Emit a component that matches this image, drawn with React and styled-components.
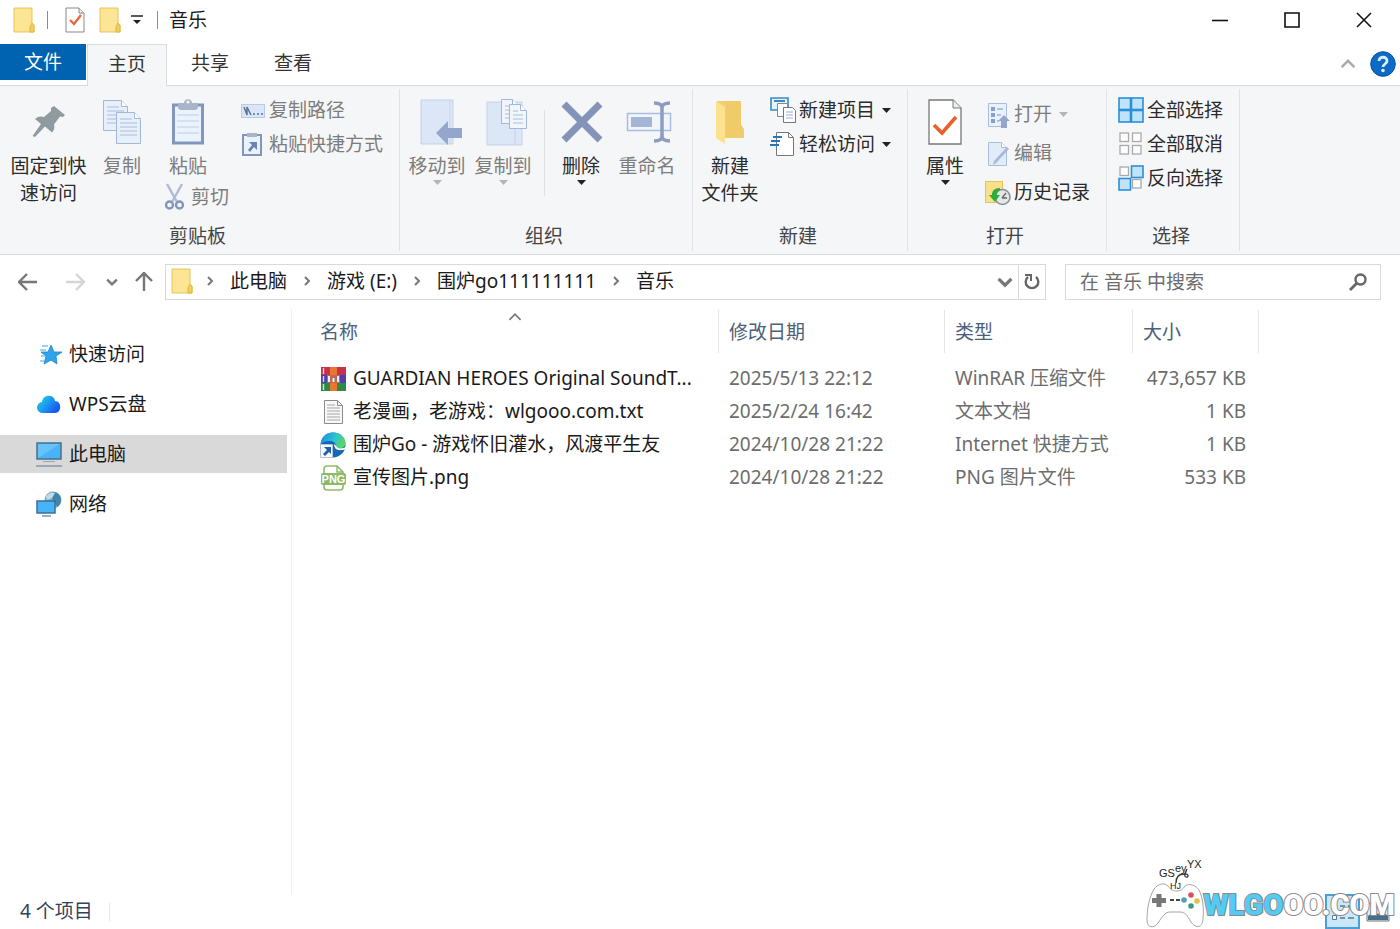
import React from "react"
import styled, { createGlobalStyle } from "styled-components"

const GlobalStyle = createGlobalStyle`
  * {
    box-sizing: border-box;
  }
  body {
    margin: 0;
    background: #fff;
    color: #1a1a1a;
    font: 19px/27px "Noto Sans", "Noto Sans CJK SC", sans-serif;
  }
  button, input {
    font: inherit;
    color: inherit;
    background: none;
    border: 0;
    padding: 0;
    margin: 0;
  }
  svg {
    display: block;
    flex: none;
  }
`;

const Window = styled.div`
  position: relative;
  display: flex;
  flex-direction: column;
  min-height: 100vh;
  overflow: hidden;
`;

/* title bar */

const TitleBar = styled.header`
  display: flex;
  align-items: center;
  height: 44px;
  padding: 0 0 4px 13px;
`;

const QuickButton = styled.button`
  display: flex;
  justify-content: center;
  width: ${props => props.$width || 24}px;
`;

const TitleDivider = styled.span`
  width: 1px;
  height: 18px;
  margin: 0 11px 0 12px;
  background: #8c8c8c;
`;

const Title = styled.h1`
  flex: 1;
  margin: 0;
  font-size: 19px;
  font-weight: 400;
`;

const WindowButton = styled.button`
  display: flex;
  align-items: center;
  justify-content: center;
  width: 72px;
  height: 40px;
`;

/* ribbon */

const TabRow = styled.nav`
  display: flex;
  align-items: flex-start;
  gap: 3px;
  height: 42px;
  padding-right: 4px;
  box-shadow: inset 0 -1px #dadbdc;
`;

const FileTab = styled.button`
  width: 86px;
  height: 36px;
  margin-right: -2px;
  background: #0063b1;
  color: #fff;
`;

const Tab = styled.button`
  width: 80px;
  height: 42px;
  padding-bottom: 3px;
  color: #333;
  ${props => props.$active && `
    background: #f5f6f7;
    border: 1px solid #dadbdc;
    border-bottom: 0;
  `}
`;

const TabTools = styled.div`
  display: flex;
  align-items: center;
  gap: 14px;
  height: 40px;
  margin-left: auto;
`;

const Ribbon = styled.section`
  display: flex;
  padding: 3px 0;
  background: #f5f6f7;
  border-bottom: 1px solid #dadbdc;
`;

const GroupBox = styled.div`
  display: flex;
  flex-direction: column;
  width: ${props => props.$width}px;
  border-right: 1px solid #e0e2e4;
`;

const GroupBody = styled.div`
  display: flex;
  height: 134px;
  padding-left: ${props => props.$indent}px;
`;

const GroupLabel = styled.div`
  height: 28px;
  padding-right: 4px;
  text-align: center;
  color: #444;
`;

const BigButton = styled.button`
  display: flex;
  flex-direction: column;
  align-items: center;
  align-self: flex-start;
  width: ${props => props.$width || 66}px;
  padding-top: 9px;
  color: ${props => props.$off ? "#7d7d7d" : "#2b2b2b"};
  white-space: nowrap;
`;

const BigIcon = styled.span`
  display: flex;
  align-items: center;
  justify-content: center;
  height: 48px;
  margin-bottom: 7px;
`;

const SmallButton = styled.button`
  display: flex;
  align-items: center;
  gap: 3px;
  height: ${props => props.$height || 34}px;
  color: ${props => props.$off ? "#7d7d7d" : "#2b2b2b"};
  white-space: nowrap;

  span + svg {
    margin-left: 4px;
  }
`;

const Stack = styled.div`
  display: flex;
  flex-direction: column;
  align-items: flex-start;
  padding-top: ${props => props.$top || 0}px;
  margin-left: ${props => props.$gap || 0}px;
`;

const CutSlot = styled.div`
  padding-left: 7px;
`;

const RibbonRule = styled.span`
  width: 1px;
  height: 86px;
  margin: 21px 3px 0 8px;
  background: #dfe1e3;
`;

/* address row */

const AddressRow = styled.div`
  display: flex;
  align-items: center;
  height: 54px;
  padding: 0 19px 0 4px;
`;

const NavButton = styled.button`
  display: flex;
  justify-content: center;
  width: ${props => props.$width}px;
`;

const AddressBox = styled.div`
  display: flex;
  flex: 1;
  height: 36px;
  margin: 0 19px 0 3px;
  border: 1px solid #d9d9d9;
`;

const Crumbs = styled.ol`
  display: flex;
  flex: 1;
  align-items: center;
  gap: 15px;
  margin: 0;
  padding: 0 0 2px 5px;
  list-style: none;

  > svg {
    margin-right: -3px;
  }
`;

const Crumb = styled.li`
  display: flex;
  align-items: center;
  gap: 15px;
`;

const CrumbLink = styled.a`
  color: #1a1a1a;
  text-decoration: none;
  white-space: nowrap;
`;

const BoxButton = styled.button`
  display: flex;
  align-items: center;
  justify-content: center;
  width: ${props => props.$ruled ? 27 : 26}px;
  border-left: ${props => props.$ruled ? "1px solid #d9d9d9" : "0"};
`;

const SearchBox = styled.form`
  display: flex;
  align-items: center;
  width: 316px;
  height: 36px;
  padding: 0 12px 0 14px;
  border: 1px solid #d9d9d9;
`;

const SearchInput = styled.input`
  flex: 1;
  min-width: 0;
  outline: 0;

  &::placeholder {
    color: #6d6d6d;
    opacity: 1;
  }
`;

/* body */

const Body = styled.div`
  display: flex;
  flex: 1;
`;

const Sidebar = styled.nav`
  display: flex;
  flex-direction: column;
  gap: 12px;
  width: 292px;
  padding: 26px 4px 0 0;
  border-right: 1px solid #f0f0f0;
`;

const SideLink = styled.a`
  display: flex;
  align-items: center;
  gap: 7px;
  height: 38px;
  padding-left: 36px;
  background: ${props => props.$active ? "#d9d9d9" : "none"};
  color: #1a1a1a;
  text-decoration: none;
`;

const Files = styled.main`
  flex: 1;
  padding: 1px 0 0 18px;
`;

const Table = styled.table`
  width: 949px;
  table-layout: fixed;
  border-collapse: collapse;
`;

const Th = styled.th`
  position: relative;
  width: ${props => props.$width}px;
  padding: 0 0 9px;
  color: #4c607a;
  font-weight: 400;
  text-align: left;
`;

const ThLabel = styled.div`
  height: 43px;
  padding: 9px 10px 0;
  border-right: 1px solid #e5e5e5;
`;

const SortMark = styled.span`
  position: absolute;
  top: 0;
  right: 0;
  left: 0;
  display: flex;
  justify-content: center;
`;

const Td = styled.td`
  height: 33px;
  padding: 0 13px 0 10px;
  color: #6d6d6d;
  text-align: ${props => props.$right ? "right" : "left"};
  white-space: nowrap;
`;

const FileName = styled.div`
  display: flex;
  align-items: center;
  gap: 7px;
  color: #1a1a1a;
`;

const StatusBar = styled.footer`
  display: flex;
  align-items: center;
  height: 35px;
  padding: 0 5px 0 20px;
  color: #33415c;
`;

const StatusRule = styled.span`
  width: 1px;
  height: 18px;
  margin: 0 auto 0 16px;
  background: #e5e5e5;
`;

const ViewButton = styled.button`
  display: flex;
  align-items: center;
  justify-content: center;
  width: 35px;
  height: 35px;
  border: ${props => props.$active ? "2px solid #4a9fd8" : "0"};
  background: ${props => props.$active ? "#cbe8fa" : "none"};
`;

const Watermark = styled.div`
  position: absolute;
  right: 5px;
  bottom: 0;
  display: flex;
  align-items: flex-end;
  pointer-events: none;
`;

const WatermarkText = styled.span`
  padding-bottom: 4px;
  color: #fff;
  font: 900 29px/40px Roboto, "Liberation Sans", sans-serif;
  -webkit-text-stroke: 2px #8a8a8a;
  paint-order: stroke fill;

  b {
    color: #4fcdf5;
  }
`;

/* icons */

const Svg = ({ w, h, children }) => (
  <svg width={w} height={h} viewBox={`0 0 ${w} ${h}`} fill="none" aria-hidden="true">{children}</svg>
)

const Folder = () => (
  <Svg w={22} h={26}>
    <path d="M1 1h18v15l2 2v7H1z" fill="#fbe08a" stroke="#e9c75c" />
    <path d="M2 2h16v14l-2 4v4H2z" fill="#fde596" />
    <path d="M19 16l-2 4v5h4v-7z" fill="#f3cf62" stroke="#e0b843" />
  </Svg>
)

const CheckDoc = () => (
  <Svg w={20} h={26}>
    <path d="M1 1h13l5 5v19H1z" fill="#fff" stroke="#888" />
    <path d="M14 1v5h5" fill="#eee" stroke="#888" />
    <path d="M5 13l4 4 7-9" stroke="#e8673f" strokeWidth="2.4" />
  </Svg>
)

const Caret = ({ off }) => (
  <Svg w={9} h={5}><path d="M0 0h9L4.500 5z" fill={off ? "#b5b5b5" : "#222"} /></Svg>
)

const Pin = () => (
  <Svg w={34} h={34}>
    <path d="M22 1l11 9-2 2-3-0.500-6 8c1 3 0 6-2 8l-7-6L3 32l-2.500-1L9 19l-6-5c3-3 6-3 9-2l7-6v-3z" fill="#909ba1" />
  </Svg>
)

const Page = ({ x, y, w = 24, h = 31, fill = "#e6effa" }) => (
  <g transform={`translate(${x} ${y})`}>
    <path d={`M0.500 0.500h${w - 7}l6 6v${h - 7}h-${w - 1}z`} fill={fill} stroke="#a3b8d8" />
    <path d={`M${w - 6.500} 0.500v6h6`} stroke="#a3b8d8" fill="#fff" />
    <path d={`M4 7h${w - 13}M4 11h${w - 8}M4 15h${w - 8}M4 19h${w - 8}${h > 28 ? `M4 23h${w - 8}` : ""}`} stroke="#a9bcda" />
  </g>
)

const Copy = () => (
  <Svg w={38} h={46}><Page x={0} y={1} w={25} /><Page x={13} y={13} w={25} h={32} /></Svg>
)

const Paste = () => (
  <Svg w={34} h={48}>
    <rect x="2.500" y="7" width="29" height="38" fill="#eaf2fc" stroke="#8295bd" strokeWidth="3" />
    <path d="M6 17h22M6 23h22M6 29h22M6 35h22" stroke="#cbdaf0" strokeWidth="1.500" />
    <path d="M7 5h6c0-5 8-5 8 0h6v5l-2 2H9l-2-2z" fill="#aab5ca" />
    <circle cx="17" cy="4" r="1.500" fill="#f5f6f7" />
  </Svg>
)

const CopyPath = () => (
  <Svg w={26} h={26}>
    <rect x="1.500" y="7.500" width="23" height="13" fill="#d9e6f7" stroke="#b9cae4" />
    <path d="M4 10l3 8V10l4 8" stroke="#5c7299" strokeWidth="1.500" />
    <path d="M13 17h2M17 17h2M21 17h2" stroke="#5c7299" strokeWidth="1.600" />
  </Svg>
)

const PasteLink = () => (
  <Svg w={26} h={26}>
    <rect x="3" y="4" width="18" height="20" fill="#eaf2fc" stroke="#8295bd" strokeWidth="2" />
    <path d="M7 2h10v4H7z" fill="#aab5ca" />
    <path d="M9 11h8v8l-3-3-4 5-2-2 4-5z" fill="#6d84b3" />
  </Svg>
)

const Cut = () => (
  <Svg w={26} h={28}>
    <path d="M5 1l10 18M20 1L10 19" stroke="#adbcd8" strokeWidth="2.500" />
    <circle cx="7.500" cy="22" r="3.500" stroke="#8295bd" strokeWidth="2.400" />
    <circle cx="17.500" cy="22" r="3.500" stroke="#8295bd" strokeWidth="2.400" />
  </Svg>
)

const MoveTo = () => (
  <Svg w={50} h={46}>
    <path d="M9 1h32v44H9z" fill="#dbe6f6" stroke="#c2d2ea" />
    <path d="M38 1v44" stroke="#c9d8ee" />
    <path d="M24 34l12-12v7h14v10H36v7z" fill="#94a6ca" />
  </Svg>
)

const CopyTo = () => (
  <Svg w={50} h={48}>
    <path d="M9 4h35v43H9z" fill="#dbe6f6" stroke="#c2d2ea" />
    <path d="M37 24v23" stroke="#c2d2ea" />
    <Page x={23} y={1} w={18} h={25} fill="#f1f6fd" />
    <Page x={31} y={6} w={18} h={25} fill="#f1f6fd" />
  </Svg>
)

const Delete = () => (
  <Svg w={46} h={42}><path d="M6 3l36 36M42 3L6 39" stroke="#8394b8" strokeWidth="7" /></Svg>
)

const Rename = () => (
  <Svg w={50} h={44}>
    <rect x="5.500" y="13.500" width="43" height="17" fill="#f1f6fd" stroke="#a9bedf" strokeWidth="1.500" />
    <rect x="9" y="17" width="21" height="10" fill="#a5b6d5" />
    <path d="M32 3c5 0 8 1 8 5v28c0 4-3 5-8 5M48 3c-5 0-8 1-8 5M48 41c-5 0-8-1-8-5" stroke="#8c9dc0" strokeWidth="3.500" />
  </Svg>
)

const NewFolder = () => (
  <Svg w={30} h={44}>
    <path d="M2 1h24v24l3 4v9H2z" fill="#f2cf6e" />
    <path d="M11 1h15v24l2 4v8H11z" fill="#efcb69" />
    <path d="M1 1l9 6v37l-9-6z" fill="#fde28e" />
  </Svg>
)

const NewItem = () => (
  <Svg w={26} h={26}>
    <path d="M1 1h17v12H1z" fill="#e6f3fc" stroke="#3b87c0" strokeWidth="1.600" />
    <path d="M4 4h11" stroke="#3b87c0" strokeWidth="2" />
    <path d="M7.500 6.500h10v13h-10z" fill="#fff" stroke="#888" />
    <path d="M13.500 10.500h9l3 3v12h-12z" fill="#fff" stroke="#777" />
    <path d="M16 15h7M16 18h7M16 21h7" stroke="#9cabdc" />
  </Svg>
)

const EasyAccess = () => (
  <Svg w={26} h={26}>
    <path d="M6.500 1.500h12l5 5v18h-17z" fill="#fff" stroke="#777" />
    <path d="M18.500 1.500v5h5" stroke="#777" />
    <path d="M3 6h9M1 10h9M0 14h9" stroke="#2777bb" strokeWidth="2" />
  </Svg>
)

const Properties = () => (
  <Svg w={34} h={46}>
    <path d="M1 1h24l8 8v36H1z" fill="#fff" stroke="#777" strokeWidth="1.300" />
    <path d="M25 1v8h8" fill="#eee" stroke="#777" />
    <path d="M6 26l8 8 14-16" stroke="#e8602c" strokeWidth="3.600" />
  </Svg>
)

const Open = () => (
  <Svg w={26} h={26}>
    <path d="M3.500 1.500h18v23h-18z" fill="#e9f1fb" stroke="#a9bedf" />
    <path d="M6 5h4v4H6zM6 11h4v4H6zM6 17h4v4H6z" fill="#8ba0c8" />
    <path d="M12 7h6M12 13h4M12 19h2" stroke="#9db0d2" strokeWidth="1.500" />
    <path d="M19 13l6 6h-3v7h-6v-7h-3z" fill="#94a6ca" />
  </Svg>
)

const Edit = () => (
  <Svg w={26} h={26}>
    <path d="M3.500 1.500h13l5 5v18h-18z" fill="#e2ecf9" stroke="#a9bedf" />
    <path d="M16.500 1.500v5h5" fill="#fff" stroke="#a9bedf" />
    <path d="M24 8L11 22l-3 2 1-4L22 6z" fill="#a9b8d4" />
  </Svg>
)

const History = () => (
  <Svg w={26} h={26}>
    <path d="M0.500 1.500h17v21h-17z" fill="#fbe08a" stroke="#e6c353" />
    <circle cx="17.500" cy="17" r="7.500" fill="#e4e6ea" stroke="#8a8e96" strokeWidth="1.600" />
    <path d="M17 18l4-5M17 18h5" stroke="#666" strokeWidth="1.300" />
    <path d="M15 8C9 8 7 11 7 15H4l6 7 5-7h-3c0-3 1-4 3-5z" fill="#2fae3c" />
  </Svg>
)

const selected = { fill: "#bfe3fb", stroke: "#2d8fd5", strokeWidth: 1.600 }
const unselected = { fill: "#fdfdfd", stroke: "#aaa", strokeWidth: 1.300 }

// four tiles, `on` lists which of them are picked
const Tiles = ({ on }) => (
  <Svg w={26} h={26}>
    {[[0, 0], [1, 0], [0, 1], [1, 1]].map(([cx, cy], i) => {
      const picked = on.includes(i)
      const size = picked ? 11.500 : 8.500
      const inset = picked ? 1 : 2
      return (
        <rect
          key={i}
          x={inset + cx * 12.500}
          y={inset + cy * 12.500}
          width={size}
          height={size}
          {...(picked ? selected : unselected)}
        />
      )
    })}
  </Svg>
)

const Chevron = ({ dir = "down", size = 10, color = "#777", weight = 2 }) => {
  const turn = { down: 0, up: 180, right: -90 }[dir]
  return (
    <svg width={size} height={size} viewBox="0 0 10 10" fill="none" aria-hidden="true">
      <path d="M1 3l4 4 4-4" stroke={color} strokeWidth={weight} transform={`rotate(${turn} 5 5)`} />
    </svg>
  )
}

const Arrow = ({ turn = 0, color = "#777" }) => (
  <Svg w={20} h={20}>
    <path d="M1 10h18M9 2L1 10l8 8" stroke={color} strokeWidth="2.400" transform={`rotate(${turn} 10 10)`} />
  </Svg>
)

const Refresh = () => (
  <Svg w={18} h={20}>
    <path d="M13 5a6.300 6.300 0 1 1-8 0" stroke="#666" strokeWidth="2.400" />
    <path d="M2 3h6v6" stroke="#666" strokeWidth="2" />
  </Svg>
)

const SearchIcon = () => (
  <Svg w={20} h={20}>
    <circle cx="12.500" cy="7.500" r="5" stroke="#666" strokeWidth="2.400" />
    <path d="M9 11l-7 7" stroke="#666" strokeWidth="2.800" />
  </Svg>
)

const Help = () => (
  <Svg w={26} h={26}>
    <circle cx="13" cy="13" r="12.300" fill="#0b6bc7" stroke="#0a539c" />
    <path d="M9 10c0-5 8-5 8 0 0 3-4 3-4 6" stroke="#dff0ff" strokeWidth="2.800" />
    <circle cx="13" cy="19.500" r="1.800" fill="#dff0ff" />
  </Svg>
)

const Star = () => (
  <Svg w={26} h={22}>
    <path d="M15 2l3 7h8l-6 4 1 8-6-4-7 4 2-8-5-4h7z" fill="#31a3ea" stroke="#1c83cb" strokeWidth="0.800" />
    <path d="M6 3h6M4 7h6M5 13h4M4 18h4" stroke="#7cc6f4" strokeWidth="1.400" />
  </Svg>
)

const Cloud = () => (
  <Svg w={26} h={22}>
    <defs>
      <linearGradient id="cloud" x1="0" y1="0" x2="1" y2="0.600">
        <stop offset="0" stopColor="#1ee0d0" />
        <stop offset="0.500" stopColor="#1b9df3" />
        <stop offset="1" stopColor="#1a56ee" />
      </linearGradient>
    </defs>
    <path d="M7 20a5.500 5.500 0 0 1-1-11C7 1 18 1 19 8c7 0 7 12 0 12z" fill="url(#cloud)" />
  </Svg>
)

const Computer = () => (
  <Svg w={26} h={26}>
    <path d="M1 2h24v16H1z" fill="#48b4f6" stroke="#47708f" strokeWidth="1.500" />
    <path d="M2 3h22L2 17z" fill="#7dccfa" opacity="0.600" />
    <path d="M7 20.500h12" stroke="#9aa7b0" />
    <path d="M0 25h26" stroke="#8c9cab" strokeWidth="1.600" />
  </Svg>
)

const Network = () => (
  <Svg w={26} h={26}>
    <circle cx="17" cy="9" r="8.500" fill="#7fb0cc" />
    <path d="M17 1c5 0 8 4 8 8 0 3-2 6-4 7l-2-5-3-3z" fill="#4384ab" />
    <path d="M10 5c3-3 6-4 9-3l-3 5-5 2z" fill="#c1dce8" />
    <path d="M1 10h18v12H1z" fill="#48b4f6" stroke="#3b6f96" strokeWidth="1.500" />
    <path d="M6 25h9" stroke="#7d95a7" strokeWidth="1.500" />
  </Svg>
)

const Rar = () => (
  <Svg w={26} h={24}>
    <path d="M1 0h25v8H1z" fill="#c9304a" />
    <path d="M1 8h25v8H1z" fill="#4d3fb0" />
    <path d="M1 16h25v8H1z" fill="#2c8a45" />
    <path d="M10 0h7v24h-7z" fill="#e8772c" />
    <path d="M7 8h13v8H7z" fill="#b86a55" />
    <path d="M9 15V9M13.500 15v-4M18 15V9" stroke="#fff" strokeWidth="1.800" />
    <path d="M3.500 1v6M3.500 9v6M3.500 17v6" stroke="#fff" strokeWidth="1.400" opacity="0.800" />
  </Svg>
)

const TextFile = () => (
  <Svg w={26} h={26}>
    <path d="M4.500 1.500h13l5 5v18h-18z" fill="#f8f8f8" stroke="#8b8b8b" />
    <path d="M17.500 1.500v5h5" stroke="#8b8b8b" />
    <path d="M7 6h8M7 9h13M7 12h13M7 15h13M7 18h13M7 21h13" stroke="#a5a5a5" />
  </Svg>
)

const Edge = () => (
  <Svg w={26} h={26}>
    <defs>
      <linearGradient id="edge" x1="0" y1="0" x2="1" y2="0.300">
        <stop offset="0" stopColor="#1a8de0" />
        <stop offset="0.600" stopColor="#2bc1d4" />
        <stop offset="1" stopColor="#58d668" />
      </linearGradient>
    </defs>
    <circle cx="13" cy="13" r="12.500" fill="#1565b8" />
    <path d="M1 12C1 5 6 0.500 13 0.500c8 0 12.500 5 12.500 10.500 0 4-4 6-8 6-3 0-3-2-2-4 0-3-3-4-6-4-4 0-7 1-8.500 3z" fill="url(#edge)" />
    <path d="M14 12c0 5 4 8 12 5v-2c-4 2-9 2-10-1z" fill="#fff" />
    <path d="M0.500 12.500h12v13h-12z" fill="#f5faff" stroke="#b5c3d0" />
    <path d="M4 15h7v7l-2-2-4 4-2-2 4-4z" fill="#1d5fa8" />
  </Svg>
)

const Png = () => (
  <Svg w={26} h={26}>
    <path d="M4 8V4q0-3 3-3h10l6 6v1M4 20v2q0 3 3 3h13q3 0 3-3v-2" stroke="#8dba6a" strokeWidth="1.600" />
    <path d="M17 1v6h6" stroke="#8dba6a" strokeWidth="1.400" />
    <rect x="1" y="8" width="25" height="12" rx="2" fill="#8dba6a" />
    <text x="13.500" y="18" fill="#fff" textAnchor="middle" fontSize="11" fontWeight="700" fontFamily="Liberation Sans">PNG</text>
  </Svg>
)

const DetailsView = () => (
  <Svg w={26} h={24}>
    <path d="M2.500 3.500h4v4h-4zM2.500 15.500h4v4h-4z" fill="#fff" stroke="#5a7894" />
    <path d="M10 6h5M18 6h6M10 18h5M18 18h6" stroke="#5a7894" strokeWidth="1.500" />
  </Svg>
)

const ThumbView = () => (
  <Svg w={24} h={20}>
    <path d="M1 1h22v18H1z" fill="#dff0fb" stroke="#777" />
    <path d="M2 14l6-5 6 4 4-2 4 3v4H2z" fill="#456f8a" />
  </Svg>
)

const Gamepad = () => (
  <Svg w={58} h={74}>
    <path d="M8 34c4-5 10-7 14-3 3 4 5 5 9 5s6-2 8-5c4-3 11-1 14 4 4 8 5 19 4 28 0 10-7 11-12 4-4-7-6-10-11-10H24c-5 0-8 5-12 11-4 6-11 5-11-3 0-11 2-22 7-31z" fill="#fff" stroke="#a5a5a5" />
    <path d="M13 39v13M6 45.500h14" stroke="#777" strokeWidth="5" />
    <path d="M24 45h4M30 45h4" stroke="#444" strokeWidth="2" />
    <circle cx="45" cy="40" r="2.800" fill="#d8505c" />
    <circle cx="38" cy="45" r="2.800" fill="#4aa3bd" />
    <circle cx="51" cy="46" r="2.800" fill="#dfc44a" />
    <circle cx="45" cy="51" r="2.800" fill="#3d9c78" />
    <path d="M30 28c0-6 3-9 8-9 5-1 5 4 2 3s0-5 1-8" stroke="#333" strokeWidth="1.300" />
    <g fill="#222" fontFamily="Liberation Sans">
      <text x="13" y="22" fontSize="11">GS</text>
      <text x="29" y="17" fontSize="11">ey</text>
      <text x="41" y="13" fontSize="11">YX</text>
      <text x="24" y="34" fontSize="9">HJ</text>
    </g>
  </Svg>
)

const Group = ({ label, width, indent = 4, children }) => (
  <GroupBox $width={width}>
    <GroupBody $indent={indent}>{children}</GroupBody>
    <GroupLabel>{label}</GroupLabel>
  </GroupBox>
)

const Big = ({ icon, caret, off, width, children }) => (
  <BigButton $off={off} $width={width}>
    <BigIcon>{icon}</BigIcon>
    <span>{children}</span>
    {caret && <Caret off={off} />}
  </BigButton>
)

const Small = ({ icon, caret, off, height, children }) => (
  <SmallButton $off={off} $height={height}>
    {icon}
    <span>{children}</span>
    {caret && <Caret off={off} />}
  </SmallButton>
)

const crumbs = ["此电脑", "游戏 (E:)", "围炉go111111111", "音乐"]

const places = [
  { name: "快速访问", icon: <Star /> },
  { name: "WPS云盘", icon: <Cloud /> },
  { name: "此电脑", icon: <Computer />, active: true },
  { name: "网络", icon: <Network /> },
]

const columns = [
  { name: "名称", width: 409 },
  { name: "修改日期", width: 226 },
  { name: "类型", width: 188 },
  { name: "大小", width: 126 },
]

const files = [
  { icon: <Rar />, name: "GUARDIAN HEROES Original SoundT...", date: "2025/5/13 22:12", type: "WinRAR 压缩文件", size: "473,657 KB" },
  { icon: <TextFile />, name: "老漫画，老游戏：wlgooo.com.txt", date: "2025/2/24 16:42", type: "文本文档", size: "1 KB" },
  { icon: <Edge />, name: "围炉Go - 游戏怀旧灌水，风渡平生友", date: "2024/10/28 21:22", type: "Internet 快捷方式", size: "1 KB" },
  { icon: <Png />, name: "宣传图片.png", date: "2024/10/28 21:22", type: "PNG 图片文件", size: "533 KB" },
]

const App = () => (
  <Window lang="zh-CN">
    <GlobalStyle />
    <TitleBar>
      <Folder />
      <TitleDivider />
      <QuickButton $width={32} aria-label="属性"><CheckDoc /></QuickButton>
      <QuickButton $width={38} aria-label="新建文件夹"><Folder /></QuickButton>
      <QuickButton $width={16} aria-label="自定义快速访问工具栏">
        <Svg w={12} h={10}><path d="M0 1h12" stroke="#222" strokeWidth="1.500" /><path d="M2 5h8l-4 4z" fill="#222" /></Svg>
      </QuickButton>
      <TitleDivider />
      <Title>音乐</Title>
      <WindowButton aria-label="最小化">
        <Svg w={16} h={16}><path d="M0 8.500h16" stroke="#111" strokeWidth="1.600" /></Svg>
      </WindowButton>
      <WindowButton aria-label="最大化">
        <Svg w={16} h={16}><path d="M1 1h14v14H1z" stroke="#111" strokeWidth="1.600" /></Svg>
      </WindowButton>
      <WindowButton aria-label="关闭">
        <Svg w={16} h={16}><path d="M1 1l14 14M15 1L1 15" stroke="#111" strokeWidth="1.500" /></Svg>
      </WindowButton>
    </TitleBar>

    <TabRow>
      <FileTab>文件</FileTab>
      <Tab $active>主页</Tab>
      <Tab>共享</Tab>
      <Tab>查看</Tab>
      <TabTools>
        <button aria-label="折叠功能区"><Chevron dir="up" size={16} color="#aaa" weight={1.500} /></button>
        <button aria-label="帮助"><Help /></button>
      </TabTools>
    </TabRow>

    <Ribbon>
      <Group label="剪贴板" width={400} indent={8}>
        <Big icon={<Pin />} width={81}>固定到快<br />速访问</Big>
        <Big icon={<Copy />} off>复制</Big>
        <Stack>
          <Big icon={<Paste />} off>粘贴</Big>
          <CutSlot><Small icon={<Cut />} height={34} off>剪切</Small></CutSlot>
        </Stack>
        <Stack $top={4} $gap={11}>
          <Small icon={<CopyPath />} off>复制路径</Small>
          <Small icon={<PasteLink />} off>粘贴快捷方式</Small>
        </Stack>
      </Group>
      <Group label="组织" width={293}>
        <Big icon={<MoveTo />} off caret>移动到</Big>
        <Big icon={<CopyTo />} off caret>复制到</Big>
        <RibbonRule />
        <Big icon={<Delete />} caret>删除</Big>
        <Big icon={<Rename />} off>重命名</Big>
      </Group>
      <Group label="新建" width={215}>
        <Big icon={<NewFolder />}>新建<br />文件夹</Big>
        <Stack $top={4} $gap={7}>
          <Small icon={<NewItem />} caret>新建项目</Small>
          <Small icon={<EasyAccess />} caret>轻松访问</Small>
        </Stack>
      </Group>
      <Group label="打开" width={199}>
        <Big icon={<Properties />} caret>属性</Big>
        <Stack $top={6} $gap={7}>
          <Small icon={<Open />} height={39} off caret>打开</Small>
          <Small icon={<Edit />} height={39} off>编辑</Small>
          <Small icon={<History />} height={39}>历史记录</Small>
        </Stack>
      </Group>
      <Group label="选择" width={133} indent={11}>
        <Stack $top={4}>
          <Small icon={<Tiles on={[0, 1, 2, 3]} />}>全部选择</Small>
          <Small icon={<Tiles on={[]} />}>全部取消</Small>
          <Small icon={<Tiles on={[1, 2]} />}>反向选择</Small>
        </Stack>
      </Group>
    </Ribbon>

    <AddressRow>
      <NavButton $width={48} aria-label="后退"><Arrow /></NavButton>
      <NavButton $width={46} aria-label="前进"><Arrow turn={180} color="#d5d5d5" /></NavButton>
      <NavButton $width={28} aria-label="最近浏览的位置"><Chevron size={12} /></NavButton>
      <NavButton $width={36} aria-label="上移"><Arrow turn={90} /></NavButton>
      <AddressBox>
        <Crumbs>
          <Folder />
          {crumbs.map(crumb => (
            <Crumb key={crumb}>
              <Chevron dir="right" />
              <CrumbLink href="#">{crumb}</CrumbLink>
            </Crumb>
          ))}
        </Crumbs>
        <BoxButton aria-label="以前的位置"><Chevron size={16} /></BoxButton>
        <BoxButton $ruled aria-label="刷新"><Refresh /></BoxButton>
      </AddressBox>
      <SearchBox role="search">
        <SearchInput aria-label="搜索" placeholder="在 音乐 中搜索" />
        <SearchIcon />
      </SearchBox>
    </AddressRow>

    <Body>
      <Sidebar>
        {places.map(place => (
          <SideLink key={place.name} href="#" $active={place.active}>
            {place.icon}
            {place.name}
          </SideLink>
        ))}
      </Sidebar>
      <Files>
        <Table>
          <thead>
            <tr>
              {columns.map((column, i) => (
                <Th key={column.name} $width={column.width}>
                  {i === 0 && <SortMark><Chevron dir="up" size={14} weight={1.200} /></SortMark>}
                  <ThLabel>{column.name}</ThLabel>
                </Th>
              ))}
            </tr>
          </thead>
          <tbody>
            {files.map(file => (
              <tr key={file.name}>
                <Td><FileName>{file.icon}{file.name}</FileName></Td>
                <Td>{file.date}</Td>
                <Td>{file.type}</Td>
                <Td $right>{file.size}</Td>
              </tr>
            ))}
          </tbody>
        </Table>
      </Files>
    </Body>

    <StatusBar>
      <span>4 个项目</span>
      <StatusRule />
      <ViewButton $active aria-label="详细信息"><DetailsView /></ViewButton>
      <ViewButton aria-label="大缩略图"><ThumbView /></ViewButton>
    </StatusBar>

    <Watermark>
      <Gamepad />
      <WatermarkText><b>WLGO</b>OO.COM</WatermarkText>
    </Watermark>
  </Window>
)

export default App
